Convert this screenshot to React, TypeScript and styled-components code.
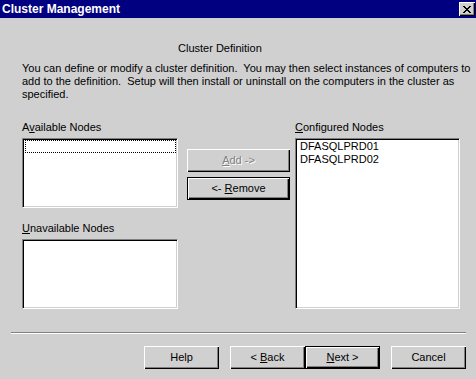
import styled, { createGlobalStyle } from "styled-components";

const GlobalStyle = createGlobalStyle`
  html, body {
    margin: 0;
    padding: 0;
    background: #d0d0d0;
  }
`;

const FACE = "#d0d0d0";

export default function App() {
    return (
        <Window>
            <GlobalStyle />
            <TitleBar>
                <Title>Cluster Management</Title>
                <CloseButton aria-label="Close">
                    <svg width="8" height="7" viewBox="0 0 8 7">
                        <path d="M0 0 L7 7 M1 0 L8 7 M7 0 L0 7 M8 0 L1 7" stroke="#000" strokeWidth="1" fill="none" shapeRendering="crispEdges" />
                    </svg>
                </CloseButton>
            </TitleBar>
            <Body>
                <Heading>Cluster Definition</Heading>
                <Description>
                    {"You can define or modify a cluster definition.\u00a0 You may then select instances of computers to"}
                    <br />
                    {"add to the definition.\u00a0 Setup will then install or uninstall on the computers in the cluster as"}
                    <br />
                    specified.
                </Description>
                <Panels>
                    <Column>
                        <Label>A<U>v</U>ailable Nodes</Label>
                        <ListBox $height={70}>
                            <FocusRow />
                        </ListBox>
                        <Label $gap={14}><U>U</U>navailable Nodes</Label>
                        <ListBox $height={70} />
                    </Column>
                    <Middle>
                        <Button $disabled $width={103}>
                            <U>A</U>dd -&gt;
                        </Button>
                        <Button $default $width={103}>
                            &lt;- <U>R</U>emove
                        </Button>
                    </Middle>
                    <Column>
                        <Label><U>C</U>onfigured Nodes</Label>
                        <ListBox $height={171}>
                            <Item>DFASQLPRD01</Item>
                            <Item>DFASQLPRD02</Item>
                        </ListBox>
                    </Column>
                </Panels>
            </Body>
            <Separator />
            <Footer>
                <Button $width={75}>Help</Button>
                <Pair>
                    <Button $width={75}>&lt; <U>B</U>ack</Button>
                    <Button $default $width={75}><U>N</U>ext &gt;</Button>
                </Pair>
                <Button $width={75}>Cancel</Button>
            </Footer>
        </Window>
    );
}

const Window = styled.div`
width: 476px;
height: 379px;
background: ${FACE};
font-family: "Liberation Sans", Arial, sans-serif;
font-size: 11px;
line-height: 13px;
color: #000;
overflow: hidden;
`;

const TitleBar = styled.div`
height: 18px;
background: #000080;
display: flex;
align-items: center;
justify-content: space-between;
padding: 0 1px 0 2px;
box-sizing: border-box;
`;

const Title = styled.span`
color: #fff;
font-weight: bold;
font-size: 12px;
`;

const CloseButton = styled.div`
width: 16px;
height: 14px;
box-sizing: border-box;
background: ${FACE};
display: flex;
align-items: center;
justify-content: center;
box-shadow: inset 1px 1px 0 #fff, inset -1px -1px 0 #000, inset -2px -2px 0 #808080;
`;

const Body = styled.div`
padding: 0 0 0 22px;
`;

const Heading = styled.div`
margin-top: 24px;
padding-left: 156px;
`;

const Description = styled.div`
margin-top: 7px;
white-space: nowrap;
`;

const Panels = styled.div`
margin-top: 20px;
display: grid;
grid-template-columns: 156px 103px 161px;
column-gap: 9px;
align-items: start;
& > :last-child {
    margin-left: -4px;
}
`;

const Column = styled.div`
display: flex;
flex-direction: column;
`;

const Label = styled.div<{ $gap?: number }>`
margin-top: ${(p) => p.$gap ?? 0}px;
margin-bottom: 4px;
`;

const U = styled.span`
text-decoration: underline;
`;

const ListBox = styled.div<{ $height: number }>`
height: ${(p) => p.$height}px;
background: #fff;
box-sizing: border-box;
border-top: 1px solid #808080;
border-left: 1px solid #808080;
border-bottom: 1px solid #fff;
border-right: 1px solid #fff;
box-shadow: inset 1px 1px 0 #000, inset -1px -1px 0 ${FACE};
padding: 1px 1px 0 2px;
`;

const FocusRow = styled.div`
height: 13px;
box-sizing: border-box;
border: 1px dotted #000;
`;

const Item = styled.div`
padding-left: 2px;
`;

const Middle = styled.div`
display: flex;
flex-direction: column;
gap: 5px;
padding-top: 28px;
`;

const Button = styled.div<{ $width: number; $default?: boolean; $disabled?: boolean }>`
width: ${(p) => p.$width}px;
height: 23px;
box-sizing: border-box;
display: flex;
align-items: center;
justify-content: center;
background: ${FACE};
border: ${(p) => (p.$default ? "1px solid #000" : "none")};
box-shadow: inset 1px 1px 0 #fff, inset -1px -1px 0 #000, inset -2px -2px 0 #808080;
color: ${(p) => (p.$disabled ? "#808080" : "#000")};
text-shadow: ${(p) => (p.$disabled ? "1px 1px 0 #fff" : "none")};
white-space: pre;
`;

const Separator = styled.div`
margin: 23px 10px 0 11px;
border-top: 1px solid #808080;
border-bottom: 1px solid #fff;
height: 0;
`;

const Footer = styled.div`
margin-top: 12px;
display: flex;
justify-content: flex-end;
gap: 11px;
padding-right: 10px;
`;

const Pair = styled.div`
display: flex;
`;
